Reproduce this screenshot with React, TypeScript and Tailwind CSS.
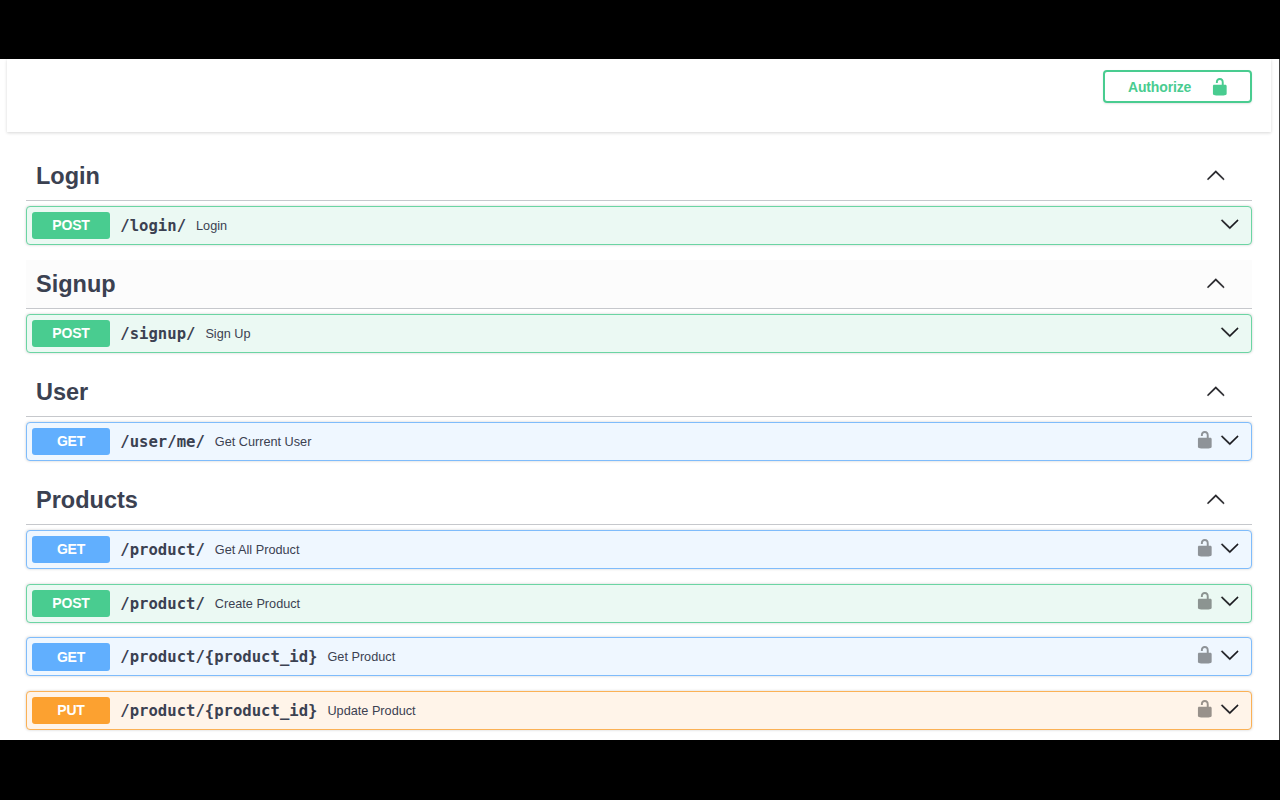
type Method = 'GET' | 'POST' | 'PUT';

interface Operation {
  method: Method;
  path: string;
  summary: string;
  secured?: boolean;
}

interface Section {
  name: string;
  hovered?: boolean;
  operations: Operation[];
}

const sections: Section[] = [
  { name: 'Login', operations: [{ method: 'POST', path: '/login/', summary: 'Login' }] },
  { name: 'Signup', hovered: true, operations: [{ method: 'POST', path: '/signup/', summary: 'Sign Up' }] },
  { name: 'User', operations: [{ method: 'GET', path: '/user/me/', summary: 'Get Current User', secured: true }] },
  {
    name: 'Products',
    operations: [
      { method: 'GET', path: '/product/', summary: 'Get All Product', secured: true },
      { method: 'POST', path: '/product/', summary: 'Create Product', secured: true },
      { method: 'GET', path: '/product/{product_id}', summary: 'Get Product', secured: true },
      { method: 'PUT', path: '/product/{product_id}', summary: 'Update Product', secured: true },
    ],
  },
];

const rowStyles: Record<Method, string> = {
  GET: 'border-[#7fbcfb] bg-[#eff7ff]',
  POST: 'border-[#6bd5a3] bg-[#ebf9f3]',
  PUT: 'border-[#fbb155] bg-[#fff4e9]',
};

const badgeStyles: Record<Method, string> = {
  GET: 'bg-[#61affe]',
  POST: 'bg-[#49cc90]',
  PUT: 'bg-[#fca130]',
};

function UnlockIcon({ className }: { className: string }) {
  return (
    <svg viewBox="0 0 20 20" className={className} fill="currentColor">
      <path d="M15.8 8H14V5.6C14 2.703 12.665 1 10 1 7.334 1 6 2.703 6 5.6V6h2v-.801C8 3.754 8.797 3 10 3c1.203 0 2 .754 2 2.199V8H4c-.553 0-1 .646-1 1.199V17c0 .549.428 1.139.951 1.307l1.197.387C5.672 18.861 6.55 19 7.1 19h5.8c.549 0 1.428-.139 1.951-.307l1.196-.387c.524-.167.953-.757.953-1.306V9.199C17 8.646 16.352 8 15.8 8z" />
    </svg>
  );
}

function ArrowUp() {
  return (
    <svg viewBox="0 0 20 20" className="mr-[26px] mb-[3px] size-[19.6px] text-[#1b1b1f]">
      <path
        fill="currentColor"
        stroke="currentColor"
        strokeWidth="0.4"
        d="M 17.418 14.908 C 17.69 15.176 18.127 15.176 18.397 14.908 C 18.667 14.64 18.668 14.207 18.397 13.939 L 10.489 6.109 C 10.219 5.841 9.782 5.841 9.51 6.109 L 1.602 13.939 C 1.332 14.207 1.332 14.64 1.602 14.908 C 1.873 15.176 2.311 15.176 2.581 14.908 L 10 7.767 L 17.418 14.908 Z"
      />
    </svg>
  );
}

function ArrowDown() {
  return (
    <svg viewBox="0 0 20 20" className="mb-[4px] size-[19.6px] text-[#1b1b1f]">
      <path
        fill="currentColor"
        stroke="currentColor"
        strokeWidth="0.4"
        d="M17.418 6.109c.272-.268.709-.268.979 0s.271.701 0 .969l-7.908 7.83c-.27.268-.707.268-.979 0l-7.908-7.83c-.27-.268-.27-.701 0-.969.271-.268.709-.268.979 0L10 13.25l7.418-7.141z"
      />
    </svg>
  );
}

function OperationRow({ op }: { op: Operation }) {
  return (
    <div
      className={`mb-[14.5px] flex h-[39.1px] items-center rounded-[4px] border pr-[11px] pl-[5px] shadow-[0_0_3px_rgba(0,0,0,0.19)] ${rowStyles[op.method]}`}
    >
      <span
        className={`flex h-[27.5px] w-[78px] items-center justify-center rounded-[3px] pt-[0.5px] text-[14px] font-bold tracking-[-0.2px] text-white ${badgeStyles[op.method]}`}
      >
        {op.method}
      </span>
      <span className="ml-[10.3px] pt-[2px] font-['DejaVu_Sans_Mono',monospace] text-[15.6px] font-bold">{op.path}</span>
      <span className="ml-[10px] pt-[1.5px] text-[12.7px]">{op.summary}</span>
      <div className="ml-auto flex items-center">
        {op.secured && <UnlockIcon className="mr-[5.5px] mb-[4px] size-[19.6px] text-black opacity-40" />}
        <ArrowDown />
      </div>
    </div>
  );
}

export default function App() {
  return (
    <div className="flex h-[800px] w-[1280px] flex-col overflow-hidden bg-black font-['Liberation_Sans',Arial,sans-serif] text-[#3b4151]">
      <main className="mt-[59px] h-[681px] overflow-hidden border-r border-[#444] bg-white">
        <div className="overflow-hidden pb-[15px]">
          <header className="mr-[8px] ml-[7px] flex h-[73px] items-start justify-end bg-white pt-[11px] pr-[19.5px] shadow-[0_1px_3px_rgba(0,0,0,0.16)]">
            <button className="flex h-[33px] w-[148.5px] items-center rounded-[4px] border-2 border-[#49cc90] pl-[23px] text-[14px] font-bold tracking-[-0.15px] text-[#49cc90] shadow-[0_1px_2px_rgba(0,0,0,0.1)]">
              <span className="w-[63.5px] pt-px text-left">Authorize</span>
              <UnlockIcon className="ml-[18.8px] size-[19.6px]" />
            </button>
          </header>
        </div>
        <div className="mt-[4.8px] mr-[27px] ml-[26px]">
          {sections.map((section) => (
            <section key={section.name}>
              <h3
                className={`mb-[5px] flex h-[49.4px] items-center justify-between border-b border-[#c6c8cc] pl-[10px] text-[23.5px] font-bold ${section.hovered ? 'bg-[#fcfcfc]' : ''}`}
              >
                <span className="pt-[1px]">{section.name}</span>
                <ArrowUp />
              </h3>
              {section.operations.map((op) => (
                <OperationRow key={op.method + op.path} op={op} />
              ))}
            </section>
          ))}
        </div>
      </main>
    </div>
  );
}
